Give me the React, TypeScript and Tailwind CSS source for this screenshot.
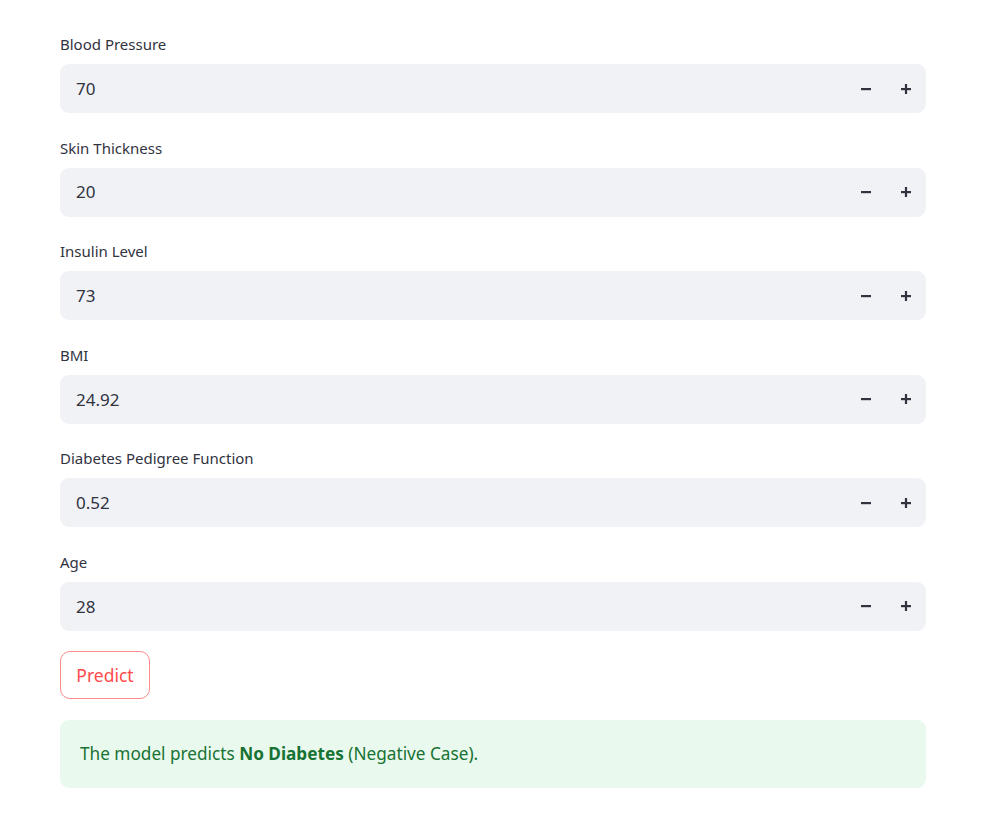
import React from "react";

const fields = [
  { label: "Blood Pressure", value: "70" },
  { label: "Skin Thickness", value: "20" },
  { label: "Insulin Level", value: "73" },
  { label: "BMI", value: "24.92" },
  { label: "Diabetes Pedigree Function", value: "0.52" },
  { label: "Age", value: "28" },
];

function Minus() {
  return (
    <svg width="12" height="12" viewBox="0 0 12 12">
      <rect x="1" y="5" width="10" height="2.2" fill="#31333f" />
    </svg>
  );
}
function Plus() {
  return (
    <svg width="12" height="12" viewBox="0 0 12 12">
      <rect x="1" y="5" width="10" height="2.2" fill="#31333f" />
      <rect x="4.9" y="1" width="2.2" height="10" fill="#31333f" />
    </svg>
  );
}

export default function App() {
  return (
    <div
      className="w-[1000px] h-[823px] bg-white text-[#31333f] overflow-hidden"
      style={{ fontFamily: '"Noto Sans", "Open Sans", sans-serif' }}
    >
      <div className="pl-[60px] pr-[74px] pt-[34px] flex flex-col">
        <div className="flex flex-col gap-[24.6px]">
          {fields.map((f) => (
            <div key={f.label} className="flex flex-col">
              <div className="h-[20px] leading-[20px] text-[15px] mb-[10px]">{f.label}</div>
              <div className="h-[49px] rounded-[9px] bg-[#f0f2f6] flex items-center">
                <div className="flex-1 pl-[16px] text-[17px]">{f.value}</div>
                <div className="flex items-center w-[40px] justify-center ml-[2px]">
                  <Minus />
                </div>
                <div className="flex items-center w-[40px] justify-center">
                  <Plus />
                </div>
              </div>
            </div>
          ))}
        </div>
        <div className="mt-[20px]">
          <button className="h-[48px] w-[90px] rounded-[10px] border border-[#ff8a8a] text-[#ff4b4b] text-[17.5px] bg-white">
            Predict
          </button>
        </div>
        <div className="mt-[21px] h-[68px] rounded-[9px] bg-[#e9f9ee] flex items-center pl-[20px] text-[17.2px] text-[#177233]">
          <span>
            The model predicts <b className="font-bold">No Diabetes</b> (Negative Case).
          </span>
        </div>
      </div>
    </div>
  );
}
